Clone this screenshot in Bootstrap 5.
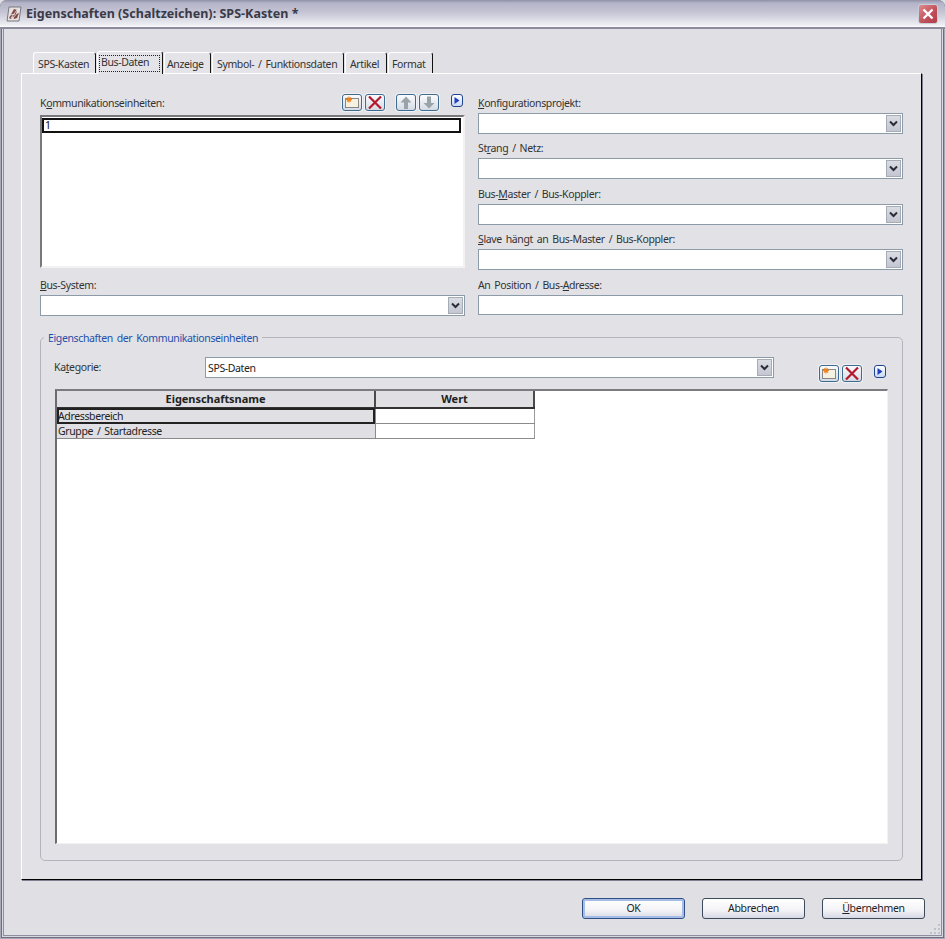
<!DOCTYPE html>
<html lang="de">
<head>
<meta charset="utf-8">
<title>Eigenschaften</title>
<link href="https://cdn.jsdelivr.net/npm/bootstrap@5.3.0/dist/css/bootstrap.min.css" rel="stylesheet">
<style>
html,body{margin:0;height:939px;overflow:hidden;background:#e0dfe3}
body{font:10.5px/13px "Noto Sans",sans-serif;letter-spacing:-.37px;word-spacing:1.5px;color:#222}
u{text-underline-offset:1px}
.dlg{position:relative;width:945px;height:939px;background:#e0dfe3;border-radius:7px 7px 0 0;box-shadow:inset 0 0 0 1px #a8a8b6,inset 0 0 0 2px #6d6d7e,inset 0 0 0 3px #d9d9e4,inset 0 0 0 4px #8e8ea0;overflow:hidden}
.ttl{height:29px;padding:0 7px 0 6px;background:linear-gradient(#8f8fa6 0,#b4b4c8 3px,#c4c4d4 12px,#eeeef3 25px,#fff 27px);border-bottom:2px solid #8b8b9c;border-radius:7px 7px 0 0}
.ttl-text{font:700 12.5px/16px "Noto Sans",sans-serif;color:#3a3a48;margin-left:4px;letter-spacing:.03px;word-spacing:0}
.xbtn{width:20px;height:20px;padding:0;border:1px solid #c8cfd8;border-radius:3px;background:linear-gradient(135deg,#e08a8e,#c04e58 60%,#b23d48);margin-top:1px}
.tabrow{height:23px;margin:21px 0 0 33px;padding:0;border:0;align-items:flex-end;list-style:none}
.tabx{height:21px;padding:5px 0 0 4px;margin-right:1px;color:#333;border-top:1px solid #fff;border-left:1px solid #fff;border-right:1px solid #111;border-radius:3px 3px 0 0;white-space:nowrap;background:#e4e3e7}
.tw1{width:63px}.tw3{width:47px;padding-left:2px}.tw4{width:132px}.tw5{width:42px}.tw6{width:45px;padding-left:3px}
.tabx-on{width:66px;height:23px;padding:3px 0 0 1px;position:relative;z-index:2;margin-bottom:-1px;background:#e4e3e7}
.focusbox{display:block;width:61px;border:1px dotted #222;padding:0 0 3px 1px;height:17px;line-height:12px}
.pane{margin:0 23px 0 21px;height:807px;background:#e2e2e6;border:1px solid #000;border-top-color:#fff;border-left-color:#fff;border-right-width:1px;padding:20px 18px 0 18px;box-shadow:1px 1px 0 #808090}
.cols{gap:13px}
.colx{width:425px}
.leftcol{display:grid;grid-template-rows:21px 153px 27px 21px}
.rightcol{display:grid;grid-template-rows:19px 21px 24px 21px 25px 21px 24px 21px 25px 20px}
.lbl{align-self:end;padding-bottom:3px;color:#333}
.lbhead{align-items:flex-start}
.lbhead .lbl{align-self:flex-start;padding:3px 0 0}
.listx{background:#fff;border:2px solid #77777c;border-right-color:#f2f2f2;border-bottom-color:#f2f2f2;border-radius:0;padding:1px 0 0}
.listx .sel{height:15px;border:2px solid #111;line-height:11px;padding:0 0 0 1px;margin-right:2px;background:#fff;color:#111}
.combo{height:21px;background:#fff;border:1px solid #8d9ba8;border-radius:0;padding:0}
.combo span.v{padding-left:2px;line-height:21px;color:#222}
.drop{width:17px;height:19px;border:1px solid #fff;outline:1px solid #a6acb5;outline-offset:-2px;background:linear-gradient(#dcdee5,#c2c5d0);padding:0;border-radius:0}
.inpt{height:20px;background:#fff;border:1px solid #8d9ba8;border-radius:0;padding:0}
.tools{gap:3px;margin-right:2px}
.sp-a{width:5px}.sp-b{width:6px}
.tb{width:20px;height:17px;padding:0;background:linear-gradient(#fbfbfd,#d4dae4);border:1px solid #3e6a8e;border-radius:3px;box-shadow:0 0 0 1px #f0f1f6}
.tb-blue{width:12px;height:13px;padding:0;border:1px solid #20458f;border-radius:3px;background:linear-gradient(#fff,#c9d8f2)}
.ic{display:block;margin:auto}
.grp{position:relative;margin-top:21px;height:524px;border:1px solid #b4b4bc;border-radius:5px;padding:19px 14px 0}
.grp-title{position:absolute;left:3px;top:-6px;padding:0 4px;background:#e2e2e6;color:#1f4fa8;line-height:13px}
.catrow{height:32px}
.catlbl{width:151px;margin:4px 0 0 -1px;color:#333}
.catcombo{width:569px}
.gridbox{height:455px;background:#fff;border-top:2px solid #7c7c80;border-left:2px solid #6c6c70;border-right:1px solid #f2f2f2;border-bottom:1px solid #f2f2f2}
.tbl{width:477px;margin:0;table-layout:fixed;border-collapse:collapse;font-size:10.5px;line-height:13px}
.tbl th{height:17px;padding:0 0 2px;text-align:center;background:#e0dfe3;border-right:2px solid #4a4a4a;border-bottom:2px solid #333;color:#222;font:700 11px/13px "Noto Sans",sans-serif;letter-spacing:-.05px}
.tbl td{height:15px;padding:1px 0 0 1px;background:#e0dfe3;border-bottom:1px solid #8a8a8a;border-right:1px solid #8a8a8a;color:#222}
.tbl td.val{background:#fff;border-right:1px solid #9a9a9a}
.tbl td.cur{outline:2px solid #222;outline-offset:-2px}
.foot{gap:17px;margin:18px 20px 0 0}
.okb{width:103px;height:21px;padding:0;font:10.5px/13px "Noto Sans",sans-serif;letter-spacing:-.3px;color:#222;border:1px solid #3c4a5c;border-radius:3px;background:linear-gradient(#fff 0,#f3f3f7 60%,#d6d8e4)}
.okb-def{box-shadow:inset 0 0 0 2px #a6bde6;border-color:#2f4f86}
.grip{position:absolute;right:4px;bottom:4px}
</style>
</head>
<body>
<div class="dlg">
  <div class="ttl d-flex align-items-center">
    <svg width="16" height="16" viewBox="0 0 16 16" class="flex-shrink-0"><path d="M3 1h12l-2 14H1z" fill="#e6e2e0" stroke="#77777f"/><path d="M3 12 8 3l3 1-1 4 3-1-2 5-3 1-1-3-2 3z" fill="#7d4a4a"/><path d="M5 12 11 4M7 12l5-6M4 9l5-1" stroke="#e9dcd8" stroke-width=".9"/></svg>
    <span class="ttl-text flex-grow-1">Eigenschaften (Schaltzeichen): SPS-Kasten *</span>
    <button type="button" class="xbtn d-flex align-items-center justify-content-center" aria-label="Schließen"><svg width="14" height="14" viewBox="0 0 14 14"><path d="M2.500 2.500l9 9M11.500 2.500l-9 9" stroke="#fff" stroke-width="2.400"/></svg></button>
  </div>

  <ul class="nav tabrow d-flex">
    <li class="tabx tw1">SPS-Kasten</li>
    <li class="tabx tabx-on"><span class="focusbox">Bus-Daten</span></li>
    <li class="tabx tw3">Anzeige</li>
    <li class="tabx tw4">Symbol- / Funktionsdaten</li>
    <li class="tabx tw5">Artikel</li>
    <li class="tabx tw6">Format</li>
  </ul>

  <div class="pane">
    <div class="d-flex cols">
      <div class="colx leftcol">
        <div class="d-flex justify-content-between lbhead">
          <div class="lbl">K<u>o</u>mmunikationseinheiten:</div>
          <div class="d-flex tools">
            <button type="button" class="btn tb" aria-label="Neu"><svg class="ic" width="18" height="15" viewBox="0 0 18 15"><rect x="2.500" y="3.500" width="13" height="9" fill="#f5f0df" stroke="#222" stroke-dasharray="1 1"/><path d="M6 1.500v6M3 4.500h6M4 2.500l4 4M8 2.500l-4 4" stroke="#f0821a" stroke-width="1.100"/></svg></button>
            <button type="button" class="btn tb" aria-label="Löschen"><svg class="ic" width="18" height="15" viewBox="0 0 18 15"><path d="M3 1.500l12 12M15 1.500l-12 12" stroke="#b3182c" stroke-width="2.200"/></svg></button>
            <span class="sp-a"></span>
            <button type="button" class="btn tb" aria-label="Auf"><svg class="ic" width="18" height="15" viewBox="0 0 18 15"><path d="M9 1.500l5.500 6H11V14H7V7.500H3.500z" fill="#9aa4a8"/></svg></button>
            <button type="button" class="btn tb" aria-label="Ab"><svg class="ic" width="18" height="15" viewBox="0 0 18 15"><path d="M7 1.500h4V8h3.500L9 13.500 3.500 8H7z" fill="#9aa4a8"/></svg></button>
            <span class="sp-b"></span>
            <button type="button" class="btn tb-blue" aria-label="Mehr"><svg class="ic" width="10" height="11" viewBox="0 0 10 11"><path d="M2.500 2v7l5-3.500z" fill="#1f3fc0"/></svg></button>
          </div>
        </div>
        <div class="listx"><div class="sel">1</div></div>
        <div class="lbl"><u>B</u>us-System:</div>
        <div class="combo d-flex justify-content-between"><span class="v"></span><button type="button" class="drop d-flex align-items-center justify-content-center" aria-label="Öffnen"><svg width="9" height="7" viewBox="0 0 9 7"><path d="M1 1.500l3.500 3.500L8 1.500" fill="none" stroke="#2c2c38" stroke-width="2"/></svg></button></div>
      </div>
      <div class="colx rightcol">
        <div class="lbl"><u>K</u>onfigurationsprojekt:</div>
        <div class="combo d-flex justify-content-between"><span class="v"></span><button type="button" class="drop d-flex align-items-center justify-content-center" aria-label="Öffnen"><svg width="9" height="7" viewBox="0 0 9 7"><path d="M1 1.500l3.500 3.500L8 1.500" fill="none" stroke="#2c2c38" stroke-width="2"/></svg></button></div>
        <div class="lbl">St<u>r</u>ang / Netz:</div>
        <div class="combo d-flex justify-content-between"><span class="v"></span><button type="button" class="drop d-flex align-items-center justify-content-center" aria-label="Öffnen"><svg width="9" height="7" viewBox="0 0 9 7"><path d="M1 1.500l3.500 3.500L8 1.500" fill="none" stroke="#2c2c38" stroke-width="2"/></svg></button></div>
        <div class="lbl">Bus-<u>M</u>aster / Bus-Koppler:</div>
        <div class="combo d-flex justify-content-between"><span class="v"></span><button type="button" class="drop d-flex align-items-center justify-content-center" aria-label="Öffnen"><svg width="9" height="7" viewBox="0 0 9 7"><path d="M1 1.500l3.500 3.500L8 1.500" fill="none" stroke="#2c2c38" stroke-width="2"/></svg></button></div>
        <div class="lbl"><u>S</u>lave hängt an Bus-Master / Bus-Koppler:</div>
        <div class="combo d-flex justify-content-between"><span class="v"></span><button type="button" class="drop d-flex align-items-center justify-content-center" aria-label="Öffnen"><svg width="9" height="7" viewBox="0 0 9 7"><path d="M1 1.500l3.500 3.500L8 1.500" fill="none" stroke="#2c2c38" stroke-width="2"/></svg></button></div>
        <div class="lbl">An Position / Bus-<u>A</u>dresse:</div>
        <div class="inpt"></div>
      </div>
    </div>

    <div class="grp">
      <div class="grp-title">Eigenschaften der Kommunikationseinheiten</div>
      <div class="d-flex catrow">
        <div class="catlbl">Ka<u>t</u>egorie:</div>
        <div class="combo catcombo d-flex justify-content-between"><span class="v">SPS-Daten</span><button type="button" class="drop d-flex align-items-center justify-content-center" aria-label="Öffnen"><svg width="9" height="7" viewBox="0 0 9 7"><path d="M1 1.500l3.500 3.500L8 1.500" fill="none" stroke="#2c2c38" stroke-width="2"/></svg></button></div>
        <div class="d-flex tools ms-auto mt-2">
          <button type="button" class="btn tb" aria-label="Neu"><svg class="ic" width="18" height="15" viewBox="0 0 18 15"><rect x="2.500" y="3.500" width="13" height="9" fill="#f5f0df" stroke="#222" stroke-dasharray="1 1"/><path d="M6 1.500v6M3 4.500h6M4 2.500l4 4M8 2.500l-4 4" stroke="#f0821a" stroke-width="1.100"/></svg></button>
          <button type="button" class="btn tb" aria-label="Löschen"><svg class="ic" width="18" height="15" viewBox="0 0 18 15"><path d="M3 1.500l12 12M15 1.500l-12 12" stroke="#b3182c" stroke-width="2.200"/></svg></button>
          <span class="sp-b"></span>
          <button type="button" class="btn tb-blue" aria-label="Mehr"><svg class="ic" width="10" height="11" viewBox="0 0 10 11"><path d="M2.500 2v7l5-3.500z" fill="#1f3fc0"/></svg></button>
        </div>
      </div>
      <div class="gridbox">
        <table class="tbl">
          <colgroup><col style="width:318px"><col style="width:159px"></colgroup>
          <thead><tr><th>Eigenschaftsname</th><th>Wert</th></tr></thead>
          <tbody>
            <tr><td class="cur">Adressbereich</td><td class="val"></td></tr>
            <tr><td>Gruppe / Startadresse</td><td class="val"></td></tr>
          </tbody>
        </table>
      </div>
    </div>
  </div>

  <div class="d-flex justify-content-end foot">
    <button type="button" class="btn okb okb-def">OK</button>
    <button type="button" class="btn okb">Abbrechen</button>
    <button type="button" class="btn okb"><u>Ü</u>bernehmen</button>
  </div>
  <svg class="grip" width="12" height="12" viewBox="0 0 12 12"><path d="M9 1h2v2H9zM5 5h2v2H5zM9 5h2v2H9zM1 9h2v2H1zM5 9h2v2H5zM9 9h2v2H9z" fill="#c0c0c8"/></svg>
</div>
</body>
</html>
